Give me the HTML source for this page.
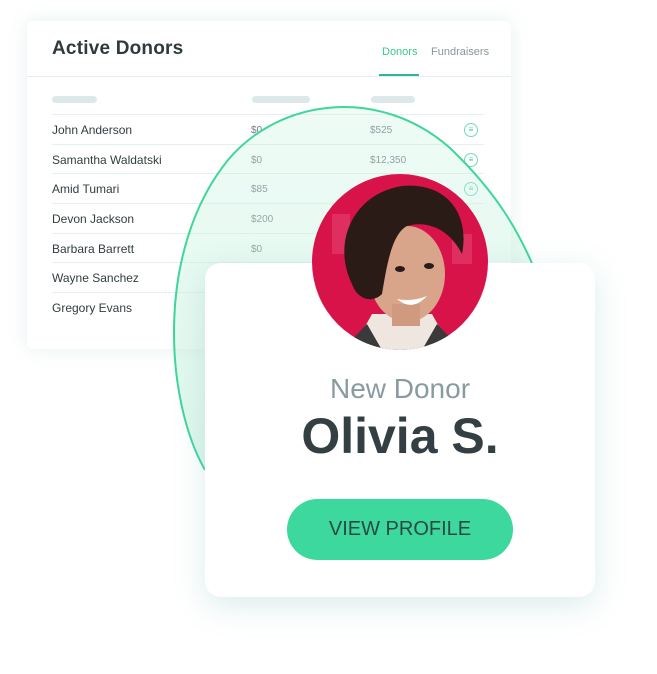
<!DOCTYPE html><html><head><style>
body{margin:0;width:657px;height:674px;background:#fff;position:relative;overflow:hidden;font-family:"Liberation Sans",sans-serif}
.c1{position:absolute;left:27px;top:21px;width:484px;height:328px;background:#fff;border-radius:6px;box-shadow:0 0 18px rgba(120,170,170,.18)}
.t{position:absolute;left:25px;top:17px;font-size:19px;color:#2f3a3e;font-weight:bold;letter-spacing:.2px}
.tab{position:absolute;top:25px;font-size:11px}
.hl{position:absolute;left:0;right:0;top:55px;height:1px;background:#e3eeee}
.sk{position:absolute;top:75px;height:7px;border-radius:4px;background:#dde8ea}
.row{position:absolute;left:25px;width:432px;height:29px;border-top:1px solid #e6eeee;font-size:12px;color:#333d40}
.row span{position:absolute;top:8px}
.row .a{left:199px;font-size:10px;color:#778;top:10px}
.row .b{left:318px;font-size:10px;color:#778;top:10px}
.ic{position:absolute;left:412px;top:8px;width:12px;height:12px;border:1px solid #6fdcb2;border-radius:50%;font-size:8px;line-height:12px;text-align:center;color:#3cc891}
.c2{position:absolute;left:205px;top:263px;width:390px;height:334px;background:#fff;border-radius:16px;box-shadow:0 8px 30px rgba(110,180,180,.25)}
</style></head><body>
<div class="c1">
<div class="t">Active Donors</div>
<div class="tab" style="left:355px;color:#3cc891">Donors</div>
<div class="tab" style="left:404px;color:#8a9699">Fundraisers</div>
<div class="hl"></div>
<div style="position:absolute;left:352px;top:53px;width:40px;height:2px;background:#2fb3a0"></div>
<div class="sk" style="left:25px;width:45px"></div>
<div class="sk" style="left:225px;width:58px"></div>
<div class="sk" style="left:344px;width:44px"></div>
<div class="row" style="top:93px"><span>John Anderson</span><span class="a">$0</span><span class="b">$525</span><div class="ic">≡</div></div>
<div class="row" style="top:123px"><span>Samantha Waldatski</span><span class="a">$0</span><span class="b">$12,350</span><div class="ic">≡</div></div>
<div class="row" style="top:152px"><span>Amid Tumari</span><span class="a">$85</span><div class="ic">≡</div></div>
<div class="row" style="top:182px"><span>Devon Jackson</span><span class="a">$200</span></div>
<div class="row" style="top:212px"><span>Barbara Barrett</span><span class="a">$0</span></div>
<div class="row" style="top:241px"><span>Wayne Sanchez</span></div>
<div class="row" style="top:271px"><span>Gregory Evans</span></div>
</div>
<svg style="position:absolute;left:0;top:0" width="657" height="674">
<defs><linearGradient id="g" x1="0" y1="0" x2="0" y2="1"><stop offset="0" stop-color="#c8f3e0" stop-opacity=".3"/><stop offset="1" stop-color="#bff0dc" stop-opacity=".55"/></linearGradient></defs>
<path d="M205 470 C165 400 155 250 228 160 C280 98 380 86 450 148 C496 192 518 230 534 268 L534 480 Z" fill="url(#g)" stroke="none"/>
<path d="M205 470 C165 400 155 250 228 160 C280 98 380 86 450 148 C496 192 518 230 534 268" fill="none" stroke="#3fd69a" stroke-width="2"/>
</svg>
<div class="c2">
<div style="position:absolute;left:0;width:100%;top:110px;text-align:center;font-size:28px;color:#8a9ba0">New Donor</div>
<div style="position:absolute;left:0;width:100%;top:144px;text-align:center;font-size:50px;font-weight:bold;color:#343f44">Olivia S.</div>
<div style="position:absolute;left:82px;top:236px;width:226px;height:61px;border-radius:31px;background:#3dd89d;text-align:center;line-height:61px;font-size:20px;color:#2a4a44">VIEW PROFILE</div>
</div>
<svg style="position:absolute;left:312px;top:174px" width="176" height="176" viewBox="0 0 176 176">
<defs><clipPath id="cc"><circle cx="88" cy="88" r="88"/></clipPath></defs>
<g clip-path="url(#cc)">
<rect width="176" height="176" fill="#d8134a"/>
<rect x="20" y="40" width="18" height="40" fill="#e54a76" opacity=".5"/>
<rect x="140" y="60" width="20" height="30" fill="#e54a76" opacity=".5"/>
<path d="M40 176 L60 140 L120 140 L140 176Z" fill="#efe6e0"/>
<path d="M30 176 L55 150 L70 176Z M150 176 L125 150 L110 176Z" fill="#3a3a3a"/>
<ellipse cx="95" cy="100" rx="38" ry="48" fill="#d9a58a"/>
<rect x="80" y="130" width="28" height="22" fill="#cf9a7f"/>
<path d="M40 110 C20 70 40 20 90 12 C135 8 158 40 150 80 C140 60 120 45 95 52 C80 60 75 90 70 120 C60 130 45 125 40 110Z" fill="#2a1b17"/>
<path d="M85 125 Q100 138 115 122 Q100 128 85 125Z" fill="#fff"/>
<ellipse cx="88" cy="95" rx="5" ry="3" fill="#2a1b17"/><ellipse cx="117" cy="92" rx="5" ry="3" fill="#2a1b17"/>
</g></svg>
</body></html>
